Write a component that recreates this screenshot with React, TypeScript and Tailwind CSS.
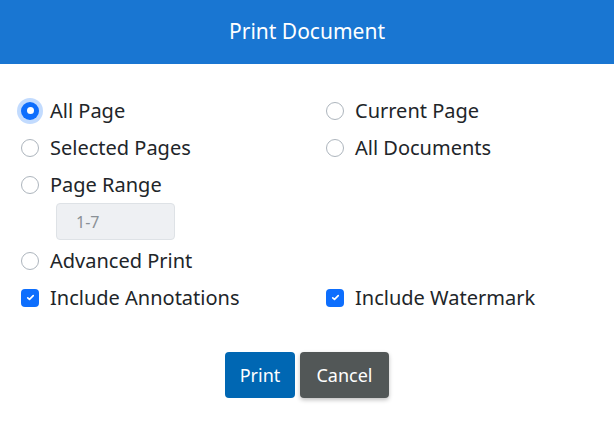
export default function App() {
  const Radio = ({ on }: { on?: boolean }) =>
    on ? (
      <span className="w-[18px] h-[18px] rounded-full bg-[#0d6efd] flex items-center justify-center shadow-[0_0_0_4px_rgba(13,110,253,0.25)] shrink-0">
        <span className="w-[7px] h-[7px] rounded-full bg-white" />
      </span>
    ) : (
      <span className="w-[18px] h-[18px] rounded-full border border-[#adb5bd] bg-white shrink-0" />
    );
  const Check = () => (
    <span className="w-[18px] h-[18px] rounded-[4px] bg-[#0d6efd] flex items-center justify-center shrink-0">
      <svg width="11" height="11" viewBox="0 0 20 20"><path d="M5 10.5l3.2 3L15 6.5" stroke="#fff" strokeWidth="3" fill="none" strokeLinecap="round" strokeLinejoin="round" /></svg>
    </span>
  );
  const Item = ({ c, t }: { c: React.ReactNode; t: string }) => (
    <div className="flex items-center gap-[11px] h-[37px]">{c}<span>{t}</span></div>
  );
  return (
    <div className="w-[614px] h-[425px] bg-white font-['Liberation_Sans',Arial,sans-serif] text-[20px] text-[#212529]">
      <div className="h-[64px] bg-[#1976d2] text-white flex items-center justify-center text-[21px]">Print Document</div>
      <div className="pl-[21px] pt-[28px] grid grid-cols-[305px_1fr]">
        <Item c={<Radio on />} t="All Page" />
        <Item c={<Radio />} t="Current Page" />
        <Item c={<Radio />} t="Selected Pages" />
        <Item c={<Radio />} t="All Documents" />
        <Item c={<Radio />} t="Page Range" />
        <div />
        <div className="pl-[35px] pb-[2px]">
          <div className="w-[119px] h-[37px] rounded-[4px] border border-[#dee2e6] bg-[#eef0f3] text-[#8a9096] text-[16px] flex items-center pl-[19px]">1-7</div>
        </div>
        <div />
        <Item c={<Radio />} t="Advanced Print" />
        <div />
        <Item c={<Check />} t="Include Annotations" />
        <Item c={<Check />} t="Include Watermark" />
      </div>
      <div className="flex justify-center gap-[5px] mt-[36px] text-[18px] text-white">
        <button className="w-[70px] h-[46px] rounded-[4px] bg-[#0067b3]">Print</button>
        <button className="w-[89px] h-[46px] rounded-[4px] bg-[#525757] shadow-[0_2px_4px_rgba(0,0,0,0.25)]">Cancel</button>
      </div>
    </div>
  );
}
